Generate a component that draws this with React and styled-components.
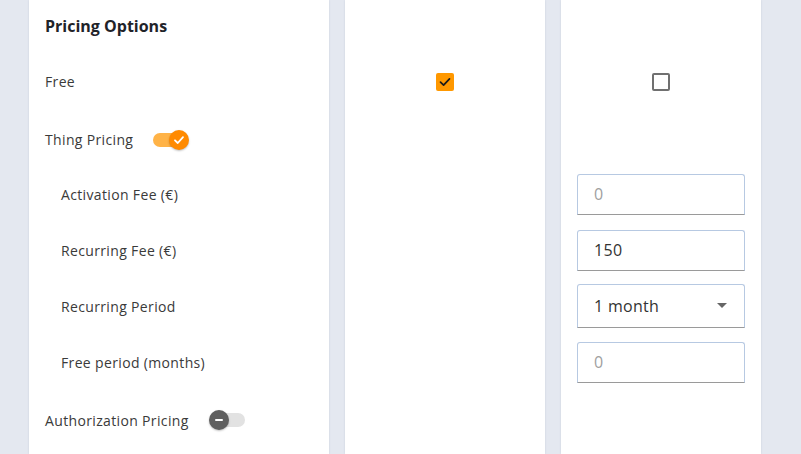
import React from 'react'
import styled, { createGlobalStyle } from 'styled-components'

const GlobalStyle = createGlobalStyle`
  html, body {
    margin: 0;
    padding: 0;
    background: #e4e8f0;
    font-family: "Open Sans", "Liberation Sans", sans-serif;
  }
`;

const rows = [
  { key: 'head', h: 52 },
  { key: 'free', h: 59 },
  { key: 'thing', h: 57 },
  { key: 'activation', h: 52 },
  { key: 'fee', h: 60 },
  { key: 'period', h: 52 },
  { key: 'freeperiod', h: 60 },
  { key: 'auth', h: 56 },
];

function App() {
  const h = (key) => rows.find((r) => r.key === key).h;

  return (
    <>
      <GlobalStyle />
      <Page>
        <Card width={300}>
          <Row h={h('head')}><Heading>Pricing Options</Heading></Row>
          <Row h={h('free')}><Label>Free</Label></Row>
          <Row h={h('thing')}>
            <Label>Thing Pricing</Label>
            <Toggle on />
          </Row>
          <Row h={h('activation')}><Label indent>Activation Fee (€)</Label></Row>
          <Row h={h('fee')}><Label indent>Recurring Fee (€)</Label></Row>
          <Row h={h('period')}><Label indent>Recurring Period</Label></Row>
          <Row h={h('freeperiod')}><Label indent>Free period (months)</Label></Row>
          <Row h={h('auth')}>
            <Label>Authorization Pricing</Label>
            <Toggle />
          </Row>
        </Card>

        <Card width={200}>
          <Row h={h('head')} />
          <Row h={h('free')} center><Checkbox checked /></Row>
        </Card>

        <Card width={200}>
          <Row h={h('head')} />
          <Row h={h('free')} center><Checkbox /></Row>
          <Row h={h('thing')} />
          <Row h={h('activation')}><Field placeholder="0" /></Row>
          <Row h={h('fee')}><Field defaultValue="150" /></Row>
          <Row h={h('period')}>
            <SelectBox>
              <span>1 month</span>
              <Caret />
            </SelectBox>
          </Row>
          <Row h={h('freeperiod')}><Field placeholder="0" /></Row>
        </Card>
      </Page>
    </>
  )
}

function Toggle({ on }) {
  return (
    <Switch>
      <Track on={on} />
      <Thumb on={on}>
        {on ? (
          <svg width="12" height="12" viewBox="0 0 12 12">
            <path d="M2 6.3 L4.8 9 L10 3.2" fill="none" stroke="#fff" strokeWidth="1.8" strokeLinecap="round" strokeLinejoin="round" />
          </svg>
        ) : (
          <svg width="12" height="12" viewBox="0 0 12 12">
            <rect x="2" y="5" width="8" height="2" rx="1" fill="#fff" />
          </svg>
        )}
      </Thumb>
    </Switch>
  )
}

function Checkbox({ checked }) {
  return (
    <Box checked={checked}>
      {checked && (
        <svg width="14" height="14" viewBox="0 0 14 14">
          <path d="M2.5 7.2 L5.6 10.2 L11.5 3.8" fill="none" stroke="#1a1a1a" strokeWidth="1.7" strokeLinecap="round" strokeLinejoin="round" />
        </svg>
      )}
    </Box>
  )
}

function Caret() {
  return (
    <svg width="10" height="6" viewBox="0 0 10 6">
      <path d="M0 0 L10 0 L5 5 Z" fill="#666" />
    </svg>
  )
}

const Page = styled.div`
  display: flex;
  gap: 16px;
  padding-left: 29px;
  height: 454px;
  overflow: hidden;
`;

const Card = styled.div`
  width: ${(p) => p.width}px;
  flex-shrink: 0;
  background: #fff;
  box-shadow: 0 0 2px rgba(60, 80, 120, 0.15);
  padding: 0 16px;
  box-sizing: border-box;
  display: flex;
  flex-direction: column;
`;

const Row = styled.div`
  height: ${(p) => p.h}px;
  flex-shrink: 0;
  display: flex;
  align-items: center;
  justify-content: ${(p) => (p.center ? 'center' : 'flex-start')};
`;

const Heading = styled.h2`
  margin: 0;
  font-size: 16px;
  font-weight: 700;
  color: #1f2329;
`;

const Label = styled.span`
  font-size: 14px;
  letter-spacing: 0.35px;
  color: #3a3a3a;
  padding-left: ${(p) => (p.indent ? 16 : 0)}px;
`;

const Switch = styled.span`
  position: relative;
  display: inline-block;
  width: 36px;
  height: 20px;
  margin-left: 20px;
`;

const Track = styled.span`
  position: absolute;
  left: ${(p) => (p.on ? 0 : 1)}px;
  top: 3px;
  width: 35px;
  height: 14px;
  border-radius: 7px;
  background: ${(p) => (p.on ? '#ffb347' : '#e2e2e2')};
`;

const Thumb = styled.span`
  position: absolute;
  top: 0;
  left: ${(p) => (p.on ? 16 : 0)}px;
  width: 20px;
  height: 20px;
  border-radius: 50%;
  background: ${(p) => (p.on ? '#ff8a00' : '#5f5f5f')};
  box-shadow: 0 1px 2px rgba(0, 0, 0, 0.25);
  display: flex;
  align-items: center;
  justify-content: center;
`;

const Box = styled.span`
  width: 18px;
  height: 18px;
  box-sizing: border-box;
  border-radius: 2px;
  border: ${(p) => (p.checked ? 'none' : '2px solid #707070')};
  background: ${(p) => (p.checked ? '#ff9800' : '#fff')};
  display: flex;
  align-items: center;
  justify-content: center;
`;

const Field = styled.input`
  width: 168px;
  height: 41px;
  box-sizing: border-box;
  border: 1px solid #b7c9e2;
  border-bottom-color: #9a9a9a;
  border-radius: 3px 3px 0 0;
  padding: 0 16px;
  font-family: "Open Sans", "Liberation Sans", sans-serif;
  font-size: 16px;
  letter-spacing: 0.3px;
  color: #333;
  outline: none;
  &::placeholder {
    color: #a0a0a0;
  }
`;

const SelectBox = styled.div`
  width: 168px;
  height: 44px;
  box-sizing: border-box;
  border: 1px solid #b7c9e2;
  border-bottom-color: #9a9a9a;
  border-radius: 3px 3px 0 0;
  padding: 0 17px 0 16px;
  display: flex;
  align-items: center;
  justify-content: space-between;
  font-size: 16px;
  letter-spacing: 0.3px;
  color: #333;
`;

export default App
